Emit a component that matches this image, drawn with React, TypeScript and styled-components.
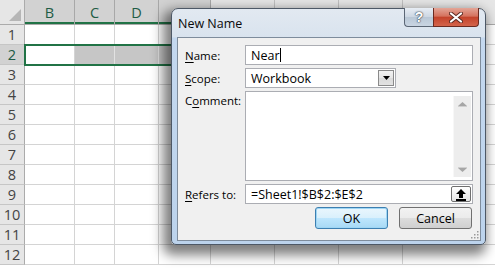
import { FC } from "react";
import styled, { createGlobalStyle, css } from "styled-components";

const COLS = ["B", "C", "D", "E", "F", "G", "H", "I"];
const ROWS = [1, 2, 3, 4, 5, 6, 7, 8, 9, 10, 11, 12];
const SELECTED_COLS = ["B", "C", "D", "E"];

const App: FC = () => {
  return (
    <>
      <GlobalStyle />
      <Screen>
        <Sheet>
          <Corner>
            <CornerMark />
          </Corner>
          {COLS.map((col) => (
            <ColHeader key={col} $selected={SELECTED_COLS.includes(col)}>
              {col}
            </ColHeader>
          ))}
          {ROWS.map((row) => (
            <RowGroup key={row} row={row} />
          ))}
          <Selection />
        </Sheet>

        <Dialog>
          <TitleBar>
            <Title>New Name</Title>
            <CaptionButtons>
              <HelpButton>?</HelpButton>
              <CloseButton>
                <svg width="14" height="11" viewBox="0 0 14 11">
                  <path
                    d="M2 1.5 L12 9.5 M12 1.5 L2 9.5"
                    stroke="#5b2a22"
                    strokeWidth="4"
                    strokeLinecap="round"
                  />
                  <path
                    d="M2 1.5 L12 9.5 M12 1.5 L2 9.5"
                    stroke="#ffffff"
                    strokeWidth="2.2"
                    strokeLinecap="round"
                  />
                </svg>
              </CloseButton>
            </CaptionButtons>
          </TitleBar>

          <Panel>
            <Form>
              <Label>
                <u>N</u>ame:
              </Label>
              <TextBox>
                <span>
                  Near
                  <Caret />
                </span>
              </TextBox>

              <Label>
                <u>S</u>cope:
              </Label>
              <Select>
                <span>Workbook</span>
                <DropButton>
                  <svg width="7" height="4" viewBox="0 0 7 4">
                    <path d="M0 0 H7 L3.5 4 Z" fill="#000" />
                  </svg>
                </DropButton>
              </Select>

              <Label $top>
                C<u>o</u>mment:
              </Label>
              <TextArea>
                <ScrollBar>
                  <svg width="9" height="5" viewBox="0 0 9 5">
                    <path d="M4.5 0 L9 4 H0 Z" fill="#a6a6a6" />
                    <rect x="0" y="4" width="9" height="1" fill="#cfcfcf" />
                  </svg>
                  <svg width="9" height="5" viewBox="0 0 9 5">
                    <rect x="0" y="0" width="9" height="1" fill="#cfcfcf" />
                    <path d="M0 1 H9 L4.5 5 Z" fill="#a6a6a6" />
                  </svg>
                </ScrollBar>
              </TextArea>

              <Label>
                <u>R</u>efers to:
              </Label>
              <TextBox>
                <span>=Sheet1!$B$2:$E$2</span>
                <CollapseButton>
                  <svg width="12" height="13" viewBox="0 0 12 13">
                    <path d="M6 1 L11 6 H8 V10 H4 V6 H1 Z" fill="#000" />
                    <rect x="1" y="11" width="10" height="2" fill="#000" />
                  </svg>
                </CollapseButton>
              </TextBox>
            </Form>

            <ButtonRow>
              <PushButton $default>OK</PushButton>
              <PushButton>Cancel</PushButton>
            </ButtonRow>

            <Grip>
              <svg width="10" height="10" viewBox="0 0 10 10">
                {[
                  [8, 2],
                  [8, 5],
                  [5, 5],
                  [8, 8],
                  [5, 8],
                  [2, 8],
                ].map(([x, y]) => (
                  <rect key={`${x}-${y}`} x={x} y={y} width="1.5" height="1.5" fill="#9a9a9a" />
                ))}
              </svg>
            </Grip>
          </Panel>
        </Dialog>
      </Screen>
    </>
  );
};

const RowGroup: FC<{ row: number }> = ({ row }) => {
  const rowSelected = row === 2;
  return (
    <>
      <RowHeader $selected={rowSelected}>{row}</RowHeader>
      {COLS.map((col) => (
        <Cell
          key={col}
          $shaded={rowSelected && SELECTED_COLS.includes(col) && col !== "B"}
        />
      ))}
    </>
  );
};

const GlobalStyle = createGlobalStyle`
  body {
    margin: 0;
    overflow: hidden;
    background: #ffffff;
    font-family: "Open Sans", "Noto Sans", sans-serif;
  }
`;

const Screen = styled.div`
  position: relative;
  width: 495px;
  height: 268px;
  overflow: hidden;
`;

const Sheet = styled.div`
  position: relative;
  display: grid;
  grid-template-columns: 25px 50px 40px 44px 52px repeat(3, 64px) 93px;
  grid-template-rows: 25px repeat(12, 20px) 3px;
`;

const headerBase = css`
  box-sizing: border-box;
  background: #e6e6e6;
  border-right: 1px solid #c0c0c0;
  border-bottom: 1px solid #ababab;
  color: #444444;
  font-family: "Open Sans", "Noto Sans", sans-serif;
  font-size: 14.5px;
  display: grid;
  place-items: center;
`;

const Corner = styled.div`
  ${headerBase};
  position: relative;
  border-right-color: #ababab;
`;

const CornerMark = styled.div`
  position: absolute;
  right: 3px;
  bottom: 3px;
  width: 0;
  height: 0;
  border-left: 12px solid transparent;
  border-bottom: 12px solid #b6b6b6;
`;

const ColHeader = styled.div<{ $selected?: boolean }>`
  ${headerBase};
  padding-top: 1px;
  ${({ $selected }) =>
    $selected &&
    css`
      background: #d2d2d2;
      color: #1f5c45;
      border-right-color: #a8a8a8;
      box-shadow: inset 0 -2px 0 #217346;
    `}
`;

const RowHeader = styled.div<{ $selected?: boolean }>`
  ${headerBase};
  border-right-color: #ababab;
  border-bottom-color: #c6c6c6;
  ${({ $selected }) =>
    $selected &&
    css`
      background: #d2d2d2;
      color: #1f5c45;
    `}
`;

const Cell = styled.div<{ $shaded?: boolean }>`
  box-sizing: border-box;
  border-right: 1px solid #d4d4d4;
  border-bottom: 1px solid #d4d4d4;
  background: ${({ $shaded }) => ($shaded ? "#c6c6c6" : "#ffffff")};
  ${({ $shaded }) => $shaded && "border-right-color: #e2e2e2;"}
`;

const Selection = styled.div`
  position: absolute;
  left: 24px;
  top: 44px;
  width: 200px;
  height: 22px;
  box-sizing: border-box;
  border: 2px solid #217346;
  pointer-events: none;
`;

const Dialog = styled.div`
  position: absolute;
  left: 171px;
  top: 8px;
  width: 315px;
  height: 237px;
  box-sizing: border-box;
  display: flex;
  flex-direction: column;
  border: 1px solid #4d5866;
  border-radius: 7px 7px 5px 5px;
  background: linear-gradient(180deg, #e2e9f1 0px, #d9e3ee 28px, #c4d8ef 29px, #bcd3ec 100%);
  box-shadow: -4px 6px 12px 4px rgba(0, 0, 0, 0.5);
  font-family: "Open Sans", "Noto Sans", sans-serif;
  font-size: 11.5px;
  color: #000000;
`;

const TitleBar = styled.div`
  height: 28px;
  display: flex;
  justify-content: space-between;
  align-items: flex-start;
  padding-left: 6px;
`;

const Title = styled.div`
  font-size: 12.5px;
  line-height: 28px;
  padding-top: 1px;
  color: #0a0a0a;
`;

const CaptionButtons = styled.div`
  display: flex;
  margin-right: 6px;
  margin-top: -1px;
`;

const captionBase = css`
  height: 19px;
  box-sizing: border-box;
  display: grid;
  place-items: center;
  border: 1px solid #5b6675;
  border-top: none;
`;

const HelpButton = styled.div`
  ${captionBase};
  width: 29px;
  border-right: none;
  border-bottom-left-radius: 4px;
  background: linear-gradient(180deg, #e7edf4 0%, #ccd6e2 50%, #b9c7d6 51%, #c9d5e2 100%);
  color: #ffffff;
  font-family: "Liberation Sans", sans-serif;
  font-weight: bold;
  font-size: 14px;
  text-shadow: 0 0 1px #44505c, 0 0 1px #44505c, 0 0 2px #44505c;
`;

const CloseButton = styled.div`
  ${captionBase};
  width: 46px;
  border-color: #6b2a20;
  border-bottom-right-radius: 4px;
  background: linear-gradient(180deg, #e3a597 0%, #d5725e 45%, #c4432b 52%, #d3644b 100%);
`;

const Panel = styled.div`
  position: relative;
  flex: 1;
  margin: 0 4px 3px 5px;
  border: 1px solid #7e8c9c;
  background: #f0f0f0;
  padding: 7px 7px 0 7px;
  display: flex;
  flex-direction: column;
`;

const Form = styled.div`
  display: grid;
  grid-template-columns: 60px 1fr;
  grid-template-rows: 20px 20px 90px 20px;
  row-gap: 3px;
`;

const Label = styled.div<{ $top?: boolean }>`
  display: flex;
  align-items: ${({ $top }) => ($top ? "flex-start" : "center")};
  padding-top: ${({ $top }) => ($top ? "2px" : "0")};
  white-space: nowrap;
  u {
    text-decoration-thickness: 1px;
    text-underline-offset: 2px;
  }
`;

const fieldBase = css`
  box-sizing: border-box;
  border: 1px solid #abadb3;
  background: #ffffff;
  display: flex;
  align-items: center;
  padding-left: 5px;
  font-size: 12.5px;
`;

const TextBox = styled.div`
  ${fieldBase};
  justify-content: space-between;
  padding-right: 1px;
  & > span {
    white-space: nowrap;
    display: flex;
    align-items: center;
  }
`;

const Caret = styled.span`
  display: inline-block;
  width: 1px;
  height: 14px;
  background: #000000;
`;

const Select = styled.div`
  ${fieldBase};
  width: 151px;
  justify-content: space-between;
  padding-right: 1px;
`;

const DropButton = styled.div`
  width: 16px;
  height: 16px;
  box-sizing: border-box;
  border: 1px solid #8a8a8a;
  background: linear-gradient(180deg, #f2f2f2 0%, #e6e6e6 50%, #dadada 51%, #e2e2e2 100%);
  display: grid;
  place-items: center;
`;

const TextArea = styled.div`
  ${fieldBase};
  align-items: stretch;
  justify-content: flex-end;
  padding: 4px 1px 3px 0;
`;

const ScrollBar = styled.div`
  width: 17px;
  background: #ededed;
  border-left: 1px solid #f7f7f7;
  display: flex;
  flex-direction: column;
  justify-content: space-between;
  align-items: center;
  padding: 6px 0 5px;
`;

const CollapseButton = styled.div`
  width: 20px;
  height: 16px;
  box-sizing: border-box;
  border: 1px solid #707070;
  border-radius: 2px;
  background: linear-gradient(180deg, #ffffff 0%, #f3f3f3 50%, #e6e6e6 100%);
  display: grid;
  place-items: center;
`;

const ButtonRow = styled.div`
  display: flex;
  justify-content: flex-end;
  gap: 11px;
  margin-top: 3px;
  padding-right: 1px;
`;

const PushButton = styled.div<{ $default?: boolean }>`
  width: 73px;
  height: 22px;
  box-sizing: border-box;
  border: 1px solid #707070;
  border-radius: 3px;
  background: linear-gradient(180deg, #f2f2f2 0%, #ebebeb 50%, #dddddd 51%, #cfcfcf 100%);
  display: grid;
  place-items: center;
  font-size: 12.5px;
  ${({ $default }) =>
    $default &&
    css`
      border-color: #3c7fb1;
      box-shadow: inset 0 0 0 1px #9fd6f4;
      background: linear-gradient(180deg, #eaf6fd 0%, #d9f0fc 50%, #bee6fd 51%, #a7d9f5 100%);
    `}
`;

const Grip = styled.div`
  position: absolute;
  right: 1px;
  bottom: 1px;
  line-height: 0;
`;

export default App;
